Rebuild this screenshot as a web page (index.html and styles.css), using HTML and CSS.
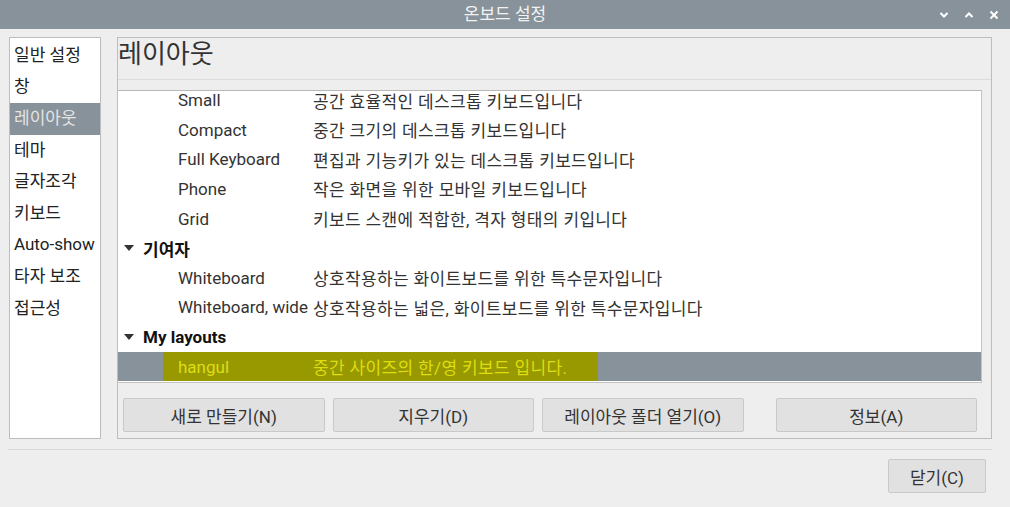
FILE: index.html
```html
<!DOCTYPE html>
<html lang="ko">
<head>
<meta charset="utf-8">
<title>온보드 설정</title>
<link rel="stylesheet" href="styles.css">
</head>
<body>
<div class="window">
  <div class="titlebar">
    <div></div>
    <div class="title">온보드 설정</div>
    <div class="controls">
      <svg class="ctl ctl-min" width="10" height="8" viewBox="0 0 10 8"><path d="M1.5 2 L5 5.5 L8.5 2" fill="none" stroke="#fff" stroke-width="2"/></svg>
      <svg class="ctl ctl-max" width="10" height="8" viewBox="0 0 10 8"><path d="M1.5 6 L5 2.5 L8.5 6" fill="none" stroke="#fff" stroke-width="2"/></svg>
      <svg class="ctl ctl-close" width="10" height="10" viewBox="0 0 10 10"><path d="M1.5 1.5 L8.5 8.5 M8.5 1.5 L1.5 8.5" fill="none" stroke="#fff" stroke-width="2"/></svg>
    </div>
  </div>

  <div class="main">
    <ul class="sidebar">
      <li>일반 설정</li>
      <li>창</li>
      <li class="active">레이아웃</li>
      <li>테마</li>
      <li>글자조각</li>
      <li>키보드</li>
      <li>Auto-show</li>
      <li>타자 보조</li>
      <li>접근성</li>
    </ul>

    <section class="frame">
      <h1 class="heading">레이아웃</h1>
      <div class="tree">
        <div class="tree-inner">
          <div class="row item"><span class="name">Small</span><span class="desc">공간 효율적인 데스크톱 키보드입니다</span></div>
          <div class="row item"><span class="name">Compact</span><span class="desc">중간 크기의 데스크톱 키보드입니다</span></div>
          <div class="row item"><span class="name">Full Keyboard</span><span class="desc">편집과 기능키가 있는 데스크톱 키보드입니다</span></div>
          <div class="row item"><span class="name">Phone</span><span class="desc">작은 화면을 위한 모바일 키보드입니다</span></div>
          <div class="row item"><span class="name">Grid</span><span class="desc">키보드 스캔에 적합한, 격자 형태의 키입니다</span></div>
          <div class="row cat"><span class="arrow"></span><span class="cat-label">기여자</span></div>
          <div class="row item"><span class="name">Whiteboard</span><span class="desc">상호작용하는 화이트보드를 위한 특수문자입니다</span></div>
          <div class="row item"><span class="name">Whiteboard, wide</span><span class="desc">상호작용하는 넓은, 화이트보드를 위한 특수문자입니다</span></div>
          <div class="row cat"><span class="arrow"></span><span class="cat-label">My layouts</span></div>
          <div class="row selected"><div class="hl"><span class="name">hangul</span><span class="desc">중간 사이즈의 한/영 키보드 입니다.</span></div></div>
        </div>
      </div>
      <div class="buttons">
        <button class="btn">새로 만들기(N)</button>
        <button class="btn">지우기(D)</button>
        <button class="btn">레이아웃 폴더 열기(O)</button>
        <button class="btn btn-about">정보(A)</button>
      </div>
    </section>
  </div>

  <div class="footer">
    <button class="btn btn-close">닫기(C)</button>
  </div>
</div>
</body>
</html>
```

FILE: styles.css
```css
* { box-sizing: border-box; }

html, body {
  margin: 0;
  padding: 0;
  width: 1010px;
  height: 507px;
  overflow: hidden;
  background: #eeeeee;
  font-family: Roboto, "Noto Sans CJK KR", sans-serif;
  font-size: 17px;
  color: #333;
}

.window {
  width: 1010px;
  height: 507px;
  display: flex;
  flex-direction: column;
}

.titlebar {
  height: 29px;
  background: #87929a;
  display: grid;
  grid-template-columns: 1fr auto 1fr;
  align-items: center;
}

.title {
  color: #f2f2f2;
  font-size: 17px;
  line-height: 29px;
}

.controls {
  display: flex;
  justify-content: flex-end;
  align-items: center;
  padding-right: 11px;
}

.ctl { display: block; }
.ctl-min { margin-right: 15px; }
.ctl-max { margin-right: 15px; }

.main {
  display: flex;
  gap: 16px;
  padding: 8px 18px 0 9px;
}

.sidebar {
  list-style: none;
  margin: 0;
  padding: 1.8px 0 0 0;
  width: 92px;
  height: 402px;
  background: #fff;
  border: 1px solid #bdbdbd;
  color: #222;
}

.sidebar li {
  height: 31.6px;
  line-height: 31.6px;
  padding-left: 4px;
  white-space: nowrap;
}

.sidebar li.active {
  background: #87929a;
  color: #e4e4e4;
}

.frame {
  width: 875px;
  height: 402px;
  border: 1px solid #bdbdbd;
  display: flex;
  flex-direction: column;
}

.heading {
  margin: 0;
  height: 42px;
  border-bottom: 1px solid #dcdcdc;
  font-size: 26px;
  font-weight: normal;
  line-height: 32px;
  color: #333;
}

.tree {
  margin-top: 10px;
  width: 864px;
  height: 293px;
  background: #fff;
  border-top: 1px solid #b8b8b8;
  border-right: 1px solid #c4c4c4;
  border-bottom: 1px solid #c4c4c4;
  overflow: hidden;
}

.tree-inner {
  margin-top: -5.6px;
}

.row {
  height: 29.6px;
  display: flex;
  align-items: center;
  white-space: nowrap;
}

.row.item .name,
.row.selected .name {
  width: 135px;
  flex: none;
}

.desc { letter-spacing: 0.35px; }

.row.item { padding-left: 60px; }

.row.cat {
  padding-left: 6px;
  font-weight: bold;
  color: #111;
}

.arrow {
  width: 0;
  height: 0;
  border-left: 5px solid transparent;
  border-right: 5px solid transparent;
  border-top: 6px solid #333;
  margin-right: 9px;
}

.row.selected {
  background: #87929a;
  padding-left: 45px;
}

.hl {
  display: flex;
  align-items: center;
  width: 435px;
  height: 100%;
  background: #989800;
  color: #dede10;
  padding-left: 15px;
}

.buttons {
  display: flex;
  gap: 8px;
  padding: 15px 14px 0 5px;
}

.btn {
  font-family: Roboto, "Noto Sans CJK KR", sans-serif;
  font-size: 17px;
  color: #333;
  background: #e1e1e1;
  border: 1px solid #c9c9c9;
  border-radius: 2px;
  height: 34px;
  width: 202px;
  padding: 0;
}

.btn-about { margin-left: 24px; }

.footer {
  margin: 10px 18px 0 8px;
  border-top: 1px solid #d8d8d8;
  display: flex;
  justify-content: flex-end;
  padding: 9px 6px 0 0;
}

.btn-close {
  width: 98px;
  height: 34px;
}
```
